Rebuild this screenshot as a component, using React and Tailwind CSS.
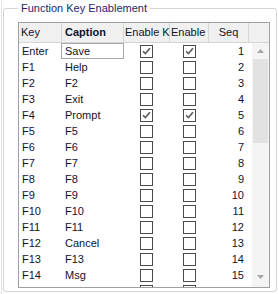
import React from "react";

const rows = [
  { key: "Enter", caption: "Save", a: true, b: true },
  { key: "F1", caption: "Help" },
  { key: "F2", caption: "F2" },
  { key: "F3", caption: "Exit" },
  { key: "F4", caption: "Prompt", a: true, b: true },
  { key: "F5", caption: "F5" },
  { key: "F6", caption: "F6" },
  { key: "F7", caption: "F7" },
  { key: "F8", caption: "F8" },
  { key: "F9", caption: "F9" },
  { key: "F10", caption: "F10" },
  { key: "F11", caption: "F11" },
  { key: "F12", caption: "Cancel" },
  { key: "F13", caption: "F13" },
  { key: "F14", caption: "Msg" },
  { key: "", caption: "", partial: true },
];

function Check({ on }) {
  return (
    <div className="w-[13px] h-[13px] border border-[#4a4a4a] bg-white flex items-center justify-center">
      {on && (
        <svg width="9" height="8" viewBox="0 0 9 8">
          <path d="M1 4.2 L3.4 6.6 L8 1.2" fill="none" stroke="#5c5c5c" strokeWidth="1.6" />
        </svg>
      )}
    </div>
  );
}

export default function App() {
  return (
    <div className="w-[278px] h-[294px] bg-white overflow-hidden font-['Liberation_Sans',Arial,sans-serif] text-[11px] text-[#12122e]">
      <div className="ml-[1px] h-full border-l border-[#e4e4e4] pl-[1px]">
        <fieldset className="w-[274px] h-[292px] border border-[#d5d5d5] rounded-[3px] pl-[14px] pt-[6px]">
          <legend className="px-[3px] leading-[16px] text-[#1c2770]">Function Key Enablement</legend>
          <div className="w-[252px] h-[266px] border border-[#a0a0a0] overflow-hidden flex flex-col">
            {/* header */}
            <div className="h-[20px] shrink-0 flex bg-[#f0f0f0] border-b border-[#d5d5d5] leading-[19px]">
              <div className="w-[43px] pl-[2px] border-r border-[#d5d5d5]">Key</div>
              <div className="w-[62px] pl-[3px] border-r border-[#d5d5d5] font-bold">Caption</div>
              <div className="w-[46px] pl-[1px] border-r border-[#d5d5d5] overflow-hidden whitespace-nowrap">
                <span className="block w-[44px] overflow-hidden">Enable K</span>
              </div>
              <div className="w-[39px] pl-[1px] border-r border-[#d5d5d5] overflow-hidden whitespace-nowrap">
                <span className="block w-[37px] overflow-hidden">Enable</span>
              </div>
              <div className="w-[40px] border-r border-[#d5d5d5] text-center">Seq</div>
              <div className="flex-1" />
            </div>
            {/* body */}
            <div className="flex-1 flex overflow-hidden">
              <div className="flex-1 flex flex-col">
                {rows.map((r, i) => (
                  <div key={i} className="h-[16px] shrink-0 flex items-center">
                    <div className="w-[42px] pl-[3px]">{r.key}</div>
                    <div className={"w-[63px] h-[16px] pl-[3px] leading-[15px] " + (i === 0 ? "border border-[#a8a8a8]" : "border border-transparent")}>
                      {r.caption}
                    </div>
                    <div className="w-[45px] flex justify-center"><Check on={r.a} /></div>
                    <div className="w-[40px] flex justify-center"><Check on={r.b} /></div>
                    <div className="w-[39px] text-right pr-[4px]">{r.partial ? "" : i + 1}</div>
                  </div>
                ))}
              </div>
              {/* scrollbar */}
              <div className="w-[17px] shrink-0 bg-[#f4f4f4] flex flex-col items-center">
                <div className="h-[16px] w-full flex items-center justify-center">
                  <svg width="7" height="4" viewBox="0 0 7 4"><path d="M0 4 L3.5 0 L7 4 Z" fill="#a6a6a6" /></svg>
                </div>
                <div className="h-[84px] w-[15px] bg-[#e2e2e2]" />
                <div className="flex-1" />
                <div className="h-[16px] w-full flex items-center justify-center mb-[2px]">
                  <svg width="7" height="4" viewBox="0 0 7 4"><path d="M0 0 L3.5 4 L7 0 Z" fill="#a6a6a6" /></svg>
                </div>
              </div>
            </div>
          </div>
        </fieldset>
      </div>
    </div>
  );
}
